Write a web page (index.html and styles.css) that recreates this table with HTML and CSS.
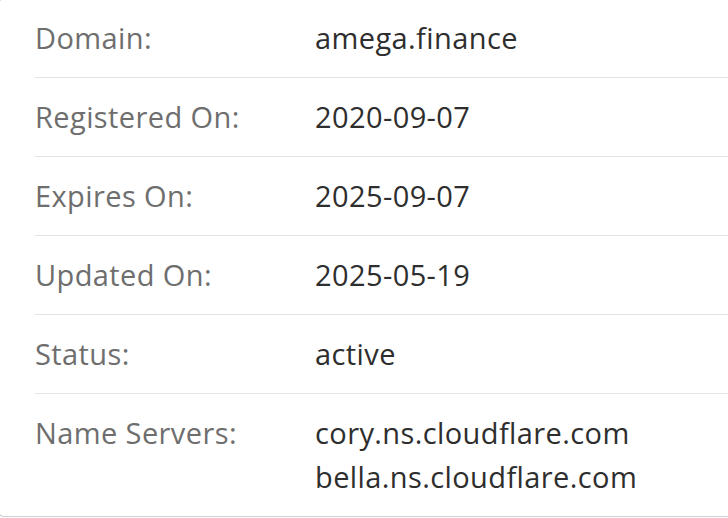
FILE: index.html
```html
<!DOCTYPE html>
<html>
<head>
<meta charset="utf-8">
<link rel="stylesheet" href="styles.css">
</head>
<body>
<div class="panel">
  <div class="row">
    <div class="label">Domain:</div>
    <div class="value">amega.finance</div>
  </div>
  <div class="row">
    <div class="label">Registered On:</div>
    <div class="value">2020-09-07</div>
  </div>
  <div class="row">
    <div class="label">Expires On:</div>
    <div class="value">2025-09-07</div>
  </div>
  <div class="row">
    <div class="label">Updated On:</div>
    <div class="value">2025-05-19</div>
  </div>
  <div class="row">
    <div class="label">Status:</div>
    <div class="value">active</div>
  </div>
  <div class="row">
    <div class="label">Name Servers:</div>
    <div class="value">cory.ns.cloudflare.com<br>bella.ns.cloudflare.com</div>
  </div>
</div>
</body>
</html>
```

FILE: styles.css
```css
html, body {
  margin: 0;
  padding: 0;
  background: #fdfdfd;
  overflow: hidden;
}

.panel {
  box-sizing: border-box;
  margin-top: -2px;
  margin-left: -2px;
  width: calc(100% + 2px);
  background: #ffffff;
  border: 1px solid #d2d2d2;
  border-right: none;
  border-radius: 6px 0 0 6px;
  padding-left: 36px;
  font-family: "Open Sans", "Liberation Sans", sans-serif;
  font-size: 29px;
  letter-spacing: 0.4px;
  line-height: 44px;
}

.row {
  display: grid;
  grid-template-columns: 280px 1fr;
  padding: 17px 0;
  border-top: 1px solid #e3e3e3;
}

.row:first-child {
  border-top: none;
}

.label {
  color: #6e6e6e;
}

.value {
  color: #2e2e2e;
}
```
